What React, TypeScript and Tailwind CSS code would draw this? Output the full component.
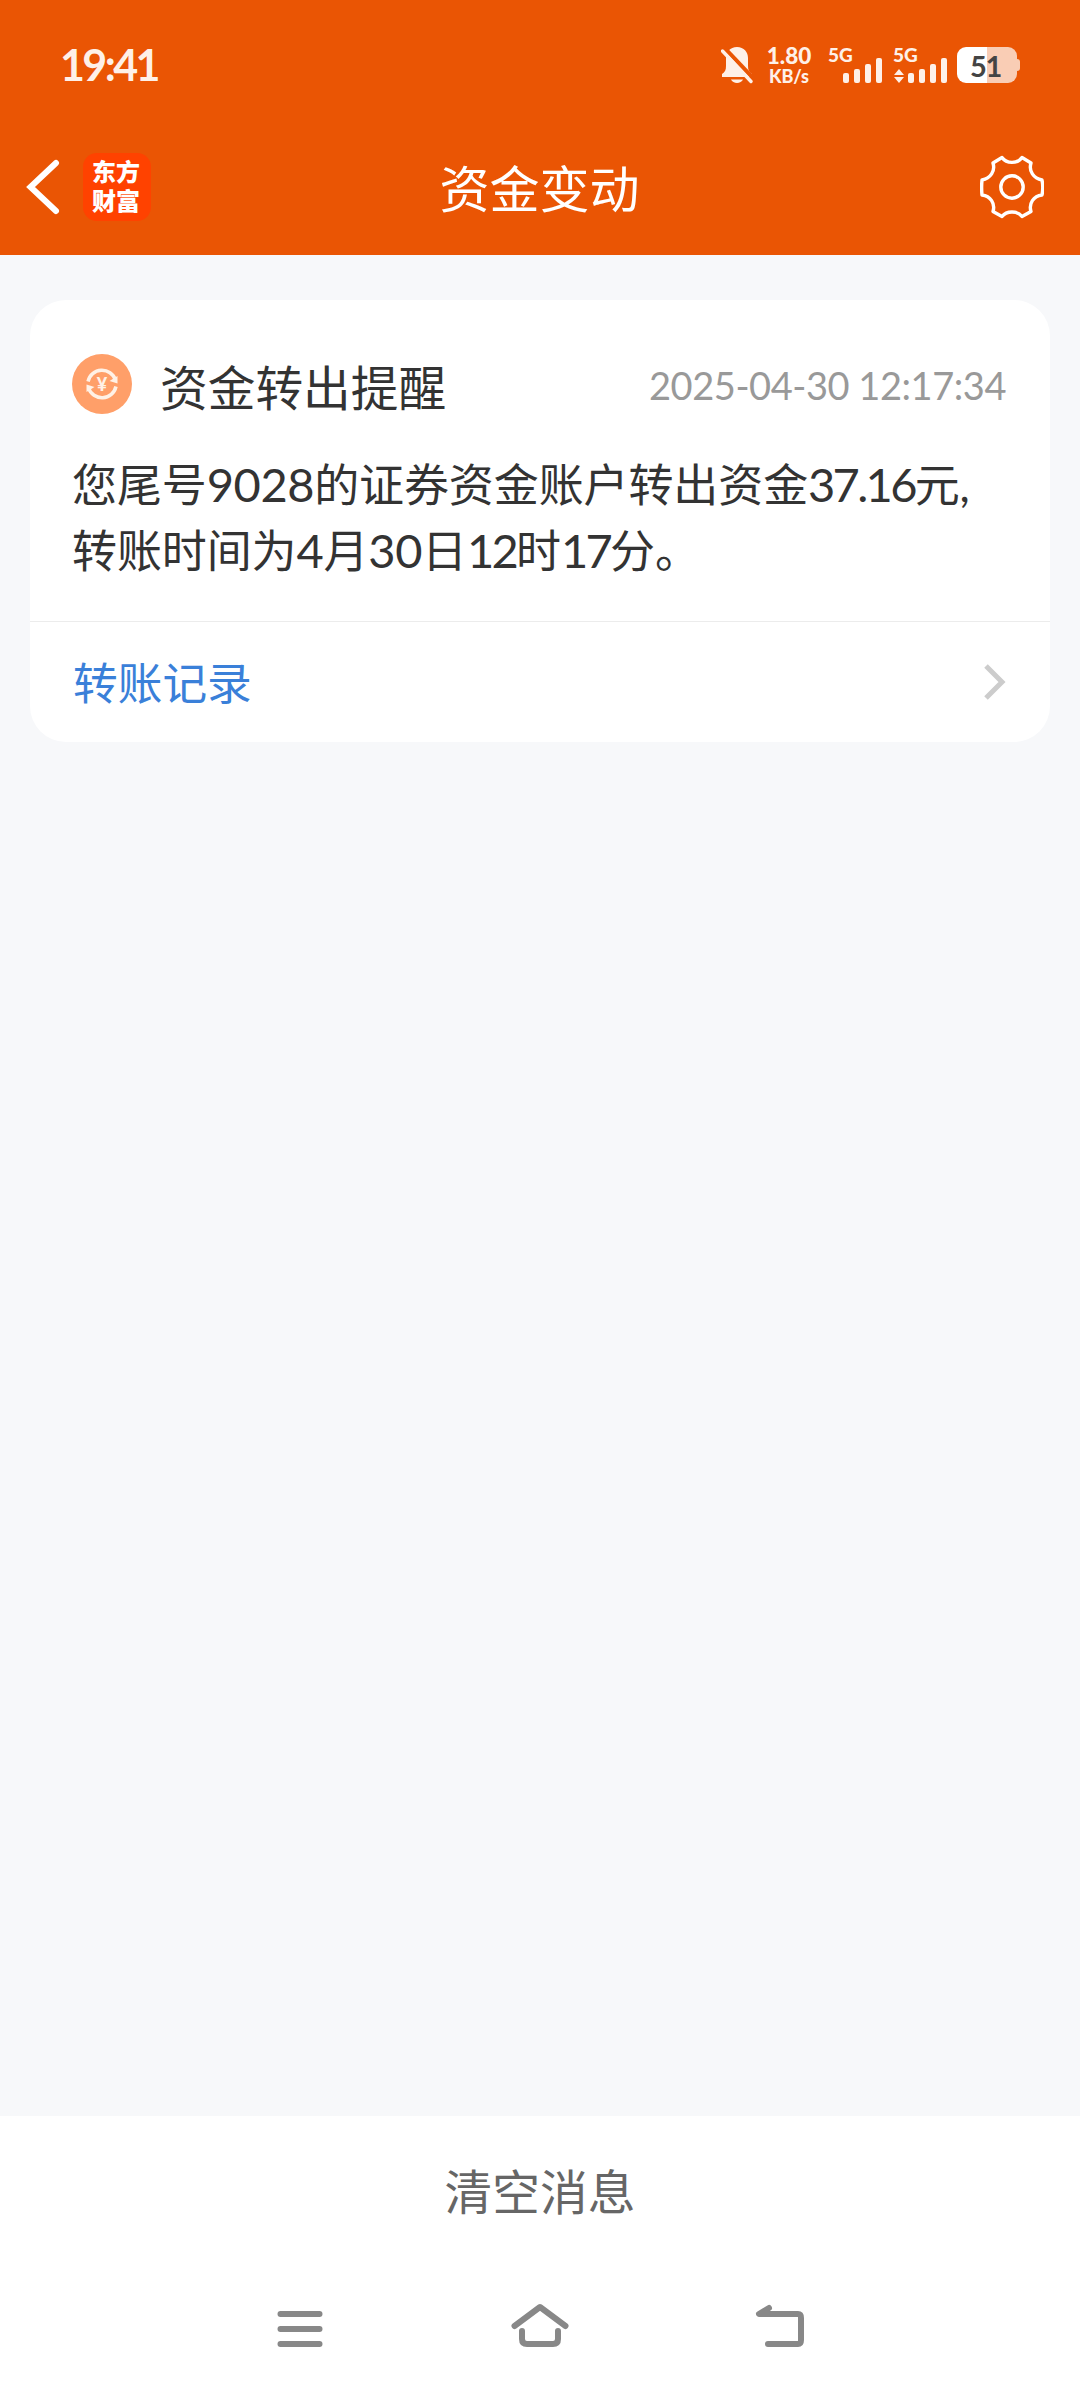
import type { ReactNode } from "react";

const message = {
  title: "资金转出提醒",
  time: "2025-04-30 12:17:34",
  action: "转账记录",
};

function Num({ children, tight = false }: { children: ReactNode; tight?: boolean }) {
  return (
    <span className={tight ? "text-[47px] tracking-[-2.7px]" : "text-[47px] tracking-[-0.4px]"}>
      {children}
    </span>
  );
}

function BellOffIcon() {
  return (
    <svg width="32" height="38" viewBox="0 0 32 38" fill="none">
      <path
        d="M16 1C9 1 5 6 5 12v8c0 4-1 6-4 8v3h30v-3c-3-2-4-4-4-8v-8C27 6 23 1 16 1Z"
        fill="#FEF0E8"
      />
      <path d="M10 33.5h12c-1 2-3.400 3.500-6 3.500s-5-1.500-6-3.500Z" fill="#FEF0E8" />
      <path d="M3 1.500 33 33" stroke="#EA5504" strokeWidth="4" />
      <path d="M1.500 5 30 35.500" stroke="#FEF0E8" strokeWidth="3.400" strokeLinecap="round" />
    </svg>
  );
}

function Signal({ active = false }: { active?: boolean }) {
  return (
    <div className="flex h-9 w-[54px] flex-col justify-between">
      <span className="h-[14px] text-[19px] leading-[15px] font-black">5G</span>
      <div className="-mt-3 flex items-end justify-end gap-[5px]">
        {active && (
          <svg className="-mr-px" width="10" height="14" viewBox="0 0 10 14" fill="#FEF0E8">
            <path d="M5 0 10 6H0ZM5 14 10 8H0Z" />
          </svg>
        )}
        <span className="h-[10px] w-[6px] rounded-[2px] bg-[#FEF0E8]" />
        <span className="h-[14px] w-[6px] rounded-[2px] bg-[#FEF0E8]" />
        <span className="h-[19px] w-[6px] rounded-[2px] bg-[#FEF0E8]" />
        <span className="h-[25px] w-[6px] rounded-[2px] bg-[#FEF0E8]" />
      </div>
    </div>
  );
}

function Battery() {
  return (
    <div className="flex items-center">
      <div className="flex h-9 w-[60px] items-center justify-center rounded-[9px] bg-linear-to-r from-white from-50% to-[#F9CDB5] to-50%">
        <span className="pr-[3px] text-[29px] leading-none font-bold tracking-[-1.2px] text-[#444]">51</span>
      </div>
      <span className="h-3 w-[3px] rounded-r-[3px] bg-[#F9CDB5]" />
    </div>
  );
}

function StatusBar() {
  return (
    <div className="flex h-[130px] items-center justify-between pr-[60px] pl-[60px] text-[#FEF0E8]">
      <span className="pb-[2px] text-[43px] leading-none font-bold tracking-[-2.6px]">19:41</span>
      <div className="flex items-center">
        <BellOffIcon />
        <div className="ml-[13px] flex w-[46px] flex-col items-center">
          <span className="text-[22.5px] leading-[22px] font-black">1.80</span>
          <span className="text-[18px] leading-[19px] font-black">KB/s</span>
        </div>
        <div className="ml-[16px] flex gap-[11px]">
          <Signal />
          <Signal active />
        </div>
        <div className="ml-[10px]">
          <Battery />
        </div>
      </div>
    </div>
  );
}

function GearIcon() {
  return (
    <svg width="64" height="64" viewBox="0 0 64 64" fill="none" stroke="#fff" strokeWidth="3.400" strokeLinejoin="round">
      <path d="M22 2.500C26.500 9 37.500 9 42 2.500L51 8C48.500 16 53.500 23.500 62 25C63 30 63 35 62 40C53.500 41 48.500 48.500 51 56.500L42 61.500C37.500 55.500 26.500 55.500 22 61.500L13 56.500C15.500 48.500 10.500 41 2 40C1.500 35 1.500 30 2 25C10.500 23.500 15.500 16 13 8Z" />
      <circle cx="32" cy="32" r="11.200" />
    </svg>
  );
}

function Header() {
  return (
    <header className="h-[255px] bg-[#EA5504] text-white">
      <StatusBar />
      <div className="grid h-[114px] grid-cols-3 items-center pr-[36px] pl-[26px]">
        <div className="flex items-center">
          <svg width="34" height="56" viewBox="0 0 34 56" fill="none" stroke="#fff" strokeWidth="6" strokeLinecap="round">
            <path d="M30 4 4.500 28 30 52" strokeLinejoin="miter" />
          </svg>
          <div className="ml-[23px] flex h-[68px] w-[68px] flex-col items-center justify-center rounded-[14px] bg-[#FF4200] pr-[2px] pb-[2px] text-[24px] leading-[29px] font-black">
            <span>东方</span>
            <span>财富</span>
          </div>
        </div>
        <h1 className="pt-[3px] pl-[9px] text-center text-[50px] leading-none whitespace-nowrap">资金变动</h1>
        <button className="justify-self-end">
          <GearIcon />
        </button>
      </div>
    </header>
  );
}

function TransferIcon() {
  return (
    <svg width="60" height="60" viewBox="0 0 60 60" fill="none">
      <circle cx="30" cy="30" r="30" fill="#FF9F69" />
      <g stroke="#FFF1E6" strokeWidth="3.500">
        <path d="M16 27.500A14.300 14.300 0 0 1 43.500 26" />
        <path d="M44 32.500A14.300 14.300 0 0 1 16.500 34" />
      </g>
      <path d="M45.500 22v7.500l-8-2.500ZM14.500 38v-7.500l8 2.500Z" fill="#FFF1E6" />
      <text x="30" y="36.500" textAnchor="middle" fontSize="18" fontWeight="900" fill="#FFF1E6">
        ¥
      </text>
    </svg>
  );
}

function MessageCard() {
  return (
    <article className="mx-[30px] mt-[45px] h-[442px] overflow-hidden rounded-[36px] bg-white">
      <div className="h-[321px] px-[42px] pt-[54px] text-[#333]">
        <div className="flex h-[60px] items-center">
          <TransferIcon />
          <h2 className="mt-2 ml-[28px] text-[47.7px] leading-none">{message.title}</h2>
          <time className="mt-[2px] ml-auto pr-[2px] text-[38px] leading-none tracking-[-0.45px] text-[#999]">
            {message.time}
          </time>
        </div>
        <p className="mt-[38px] text-[45px] leading-[65px] tracking-[-0.1px] whitespace-nowrap">
          您尾号<Num>9028</Num>的证券资金账户转出资金<Num tight>37.16</Num>元,
          <br />
          转账时间为<Num>4</Num>月<Num>30</Num>日<Num tight>12</Num>时<Num tight>17</Num>分。
        </p>
      </div>
      <a className="flex h-[121px] items-center justify-between border-t border-[#ECECEC] pr-[44px] pl-[43px]">
        <span className="pt-[3px] text-[44.7px] leading-none text-[#3A80D9]">{message.action}</span>
        <svg width="23" height="38" viewBox="0 0 23 38" fill="none" stroke="#CCC" strokeWidth="5">
          <path d="M3 3 19 19 3 35" />
        </svg>
      </a>
    </article>
  );
}

function NavBar() {
  return (
    <nav className="flex h-[127px] justify-between px-[270px] pt-[34px]">
      <svg width="60" height="60" viewBox="0 0 60 60" fill="none" stroke="#888" strokeWidth="6" strokeLinecap="round">
        <path d="M10.500 15H49.500M10.500 30H49.500M10.500 45H49.500" />
      </svg>
      <svg width="60" height="60" viewBox="0 0 60 60" fill="none" stroke="#888" strokeWidth="6" strokeLinecap="round" strokeLinejoin="round">
        <path d="M4.500 27 30 8 55.500 27" />
        <path d="M12 32V40Q12 45 17 45H43Q48 45 48 40V32" />
      </svg>
      <svg width="60" height="60" viewBox="0 0 60 60" fill="none" stroke="#888" strokeWidth="6" strokeLinecap="round" strokeLinejoin="round">
        <path d="M19 9 9 15H48Q51 15 51 19V41Q51 45 48 45H18" />
      </svg>
    </nav>
  );
}

export default function App() {
  return (
    <div className="flex h-[2392px] w-[1080px] flex-col bg-[#F7F8FA] font-[Lato,'Noto_Sans_CJK_SC',sans-serif]">
      <Header />
      <main className="flex-1">
        <MessageCard />
      </main>
      <footer className="h-[276px] bg-white">
        <button className="flex h-[149px] w-full items-center justify-center pt-[3px] text-[47.7px] leading-none text-[#666]">
          清空消息
        </button>
        <NavBar />
      </footer>
    </div>
  );
}
